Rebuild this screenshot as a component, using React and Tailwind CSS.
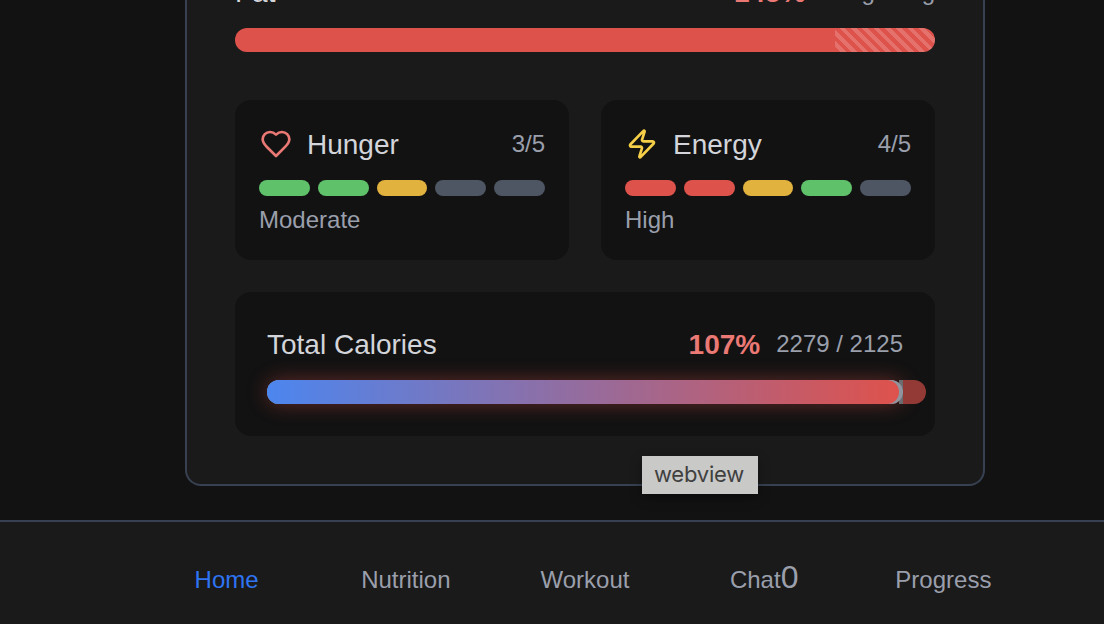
import { Zap } from "lucide-react";

const RED = "bg-[#de524c]";
const GREEN = "bg-[#5fc16a]";
const AMBER = "bg-[#e2b23f]";
const SLATE = "bg-[#4e5563]";

function Heart() {
  return (
    <svg viewBox="0 0 24 24" fill="none" stroke="currentColor" strokeWidth="2" strokeLinecap="round" strokeLinejoin="round" className="ml-px size-8 shrink-0 text-[#ea7975]">
      <path d="M19 14c1.49-1.46 3-3.21 3-5.5A5.5 5.5 0 0 0 16.5 3c-1.76 0-3 .5-4.5 2-1.5-1.5-2.74-2-4.5-2A5.5 5.5 0 0 0 2 8.5c0 2.3 1.5 4.05 3 5.5l7 7Z" />
    </svg>
  );
}

function LevelCard({ icon, title, score, levels, label }) {
  return (
    <div className="h-40 flex-1 rounded-2xl bg-[#121212] p-6">
      <div className="flex h-10 items-center justify-between">
        <div className="flex items-center gap-[15px]">
          {icon}
          <span className="pt-0.5 text-[28px] leading-10 text-[#d3d5da]">{title}</span>
        </div>
        <span className="text-2xl leading-8 text-[#9a9fac]">{score}</span>
      </div>
      <div className="mt-4 flex gap-2">
        {levels.map((color, i) => (
          <div key={i} className={`h-4 flex-1 rounded-full ${color}`} />
        ))}
      </div>
      <div className="mt-2 text-2xl leading-8 text-[#9a9fac]">{label}</div>
    </div>
  );
}

function Amounts({ percent, amount }) {
  return (
    <div className="flex items-center gap-4">
      <span className="pt-0.5 text-[28px] leading-10 font-bold text-[#ea7975]">{percent}</span>
      <span className="text-2xl leading-8 text-[#9a9fac]">{amount}</span>
    </div>
  );
}

export default function App() {
  return (
    <div className="flex h-[624px] w-[1104px] flex-col overflow-hidden bg-[#121212] font-['Liberation_Sans',Arial,sans-serif]">
      <main className="relative h-[520px] shrink-0 pl-[185px]">
        <section className="flow-root h-[486px] w-[800px] rounded-b-2xl border-x-2 border-b-2 border-[#374151] bg-[#1a1a1a] px-12">
          <div className="-mt-7 flex h-10 items-center justify-between">
            <span className="pt-0.5 text-[28px] leading-10 font-medium text-[#d3d5da]">Fat</span>
            <Amounts percent="145%" amount="102g / 70g" />
          </div>
          <div className={`mt-4 flex h-6 justify-end overflow-hidden rounded-full ${RED}`}>
            <div className="w-[100px] bg-[repeating-linear-gradient(45deg,transparent_0px,transparent_4px,rgba(255,255,255,0.18)_4px,rgba(255,255,255,0.18)_8px)]" />
          </div>

          <div className="mt-12 flex gap-8">
            <LevelCard icon={<Heart />} title="Hunger" score="3/5" label="Moderate" levels={[GREEN, GREEN, AMBER, SLATE, SLATE]} />
            <LevelCard icon={<Zap className="ml-px size-8 shrink-0 text-[#f5cf48]" />} title="Energy" score="4/5" label="High" levels={[RED, RED, AMBER, GREEN, SLATE]} />
          </div>

          <div className="mt-8 h-36 rounded-2xl bg-[#121212] p-8">
            <div className="flex h-10 items-center justify-between">
              <span className="pt-0.5 text-[28px] leading-10 text-[#d3d5da]">Total Calories</span>
              <Amounts percent="107%" amount="2279 / 2125" />
            </div>
            <div className="relative mt-4 h-6 rounded-full bg-linear-to-r/srgb from-[#4c86ef] to-[#de524c] shadow-[0_0_20px_rgba(222,82,76,0.4)]">
              <div className="absolute top-0 right-0 h-6 w-1 bg-[#6b6b70]" />
              <div className="flex h-6 justify-start rounded-full bg-[#8f949e] relative">
                <div className="h-6 w-[632px] rounded-full bg-linear-to-r/srgb from-[#4c86ef] to-[#de524c]" />
              </div>
              <div className="absolute top-0 left-full h-6 w-[23px] rounded-r-full bg-[#933a36]" />
            </div>
          </div>
        </section>
        <div className="absolute top-[456px] left-[642px] flex h-[38px] w-[116px] items-center justify-center bg-[#c9c9c8] pr-0.5 pb-0.5 font-['Inter',sans-serif] text-[22px] tracking-[-0.2px] text-[#40403f] shadow-[0_4px_12px_rgba(0,0,0,0.35)]">
          webview
        </div>
      </main>
      <nav className="flex h-[104px] shrink-0 justify-center border-t-2 border-[#374151] bg-[#1a1a1a] pt-[38px] pl-[66px] text-2xl leading-10 text-[#9a9fac]">
        <div className="w-[179.2px] text-center text-[#2f74f2]">Home</div>
        <div className="w-[179.2px] text-center">Nutrition</div>
        <div className="w-[179.2px] text-center">Workout</div>
        <div className="w-[179.2px] text-center">Chat<span className="text-[32px] leading-none">0</span></div>
        <div className="w-[179.2px] text-center">Progress</div>
      </nav>
    </div>
  );
}
